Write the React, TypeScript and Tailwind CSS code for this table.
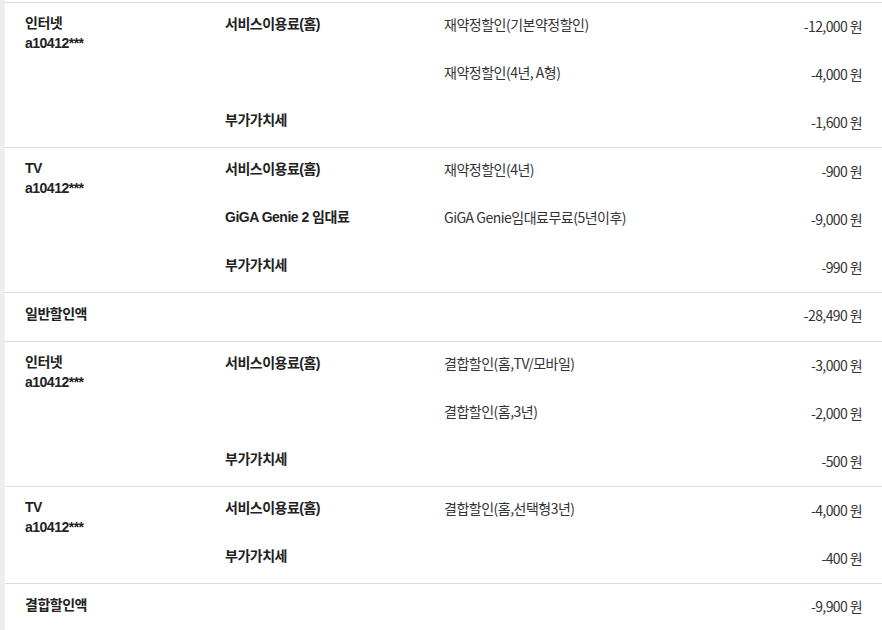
const groups: { name?: string[]; total?: { label: string; amount: string }; rows: { item?: string; desc?: string; amount: string }[] }[] = [
  {
    name: ["인터넷", "a10412***"],
    rows: [
      { item: "서비스이용료(홈)", desc: "재약정할인(기본약정할인)", amount: "-12,000" },
      { desc: "재약정할인(4년, A형)", amount: "-4,000" },
      { item: "부가가치세", amount: "-1,600" },
    ],
  },
  {
    name: ["TV", "a10412***"],
    rows: [
      { item: "서비스이용료(홈)", desc: "재약정할인(4년)", amount: "-900" },
      { item: "GiGA Genie 2 임대료", desc: "GiGA Genie임대료무료(5년이후)", amount: "-9,000" },
      { item: "부가가치세", amount: "-990" },
    ],
  },
  { total: { label: "일반할인액", amount: "-28,490" }, rows: [] },
  {
    name: ["인터넷", "a10412***"],
    rows: [
      { item: "서비스이용료(홈)", desc: "결합할인(홈,TV/모바일)", amount: "-3,000" },
      { desc: "결합할인(홈,3년)", amount: "-2,000" },
      { item: "부가가치세", amount: "-500" },
    ],
  },
  {
    name: ["TV", "a10412***"],
    rows: [
      { item: "서비스이용료(홈)", desc: "결합할인(홈,선택형3년)", amount: "-4,000" },
      { item: "부가가치세", amount: "-400" },
    ],
  },
  { total: { label: "결합할인액", amount: "-9,900" }, rows: [] },
];

const boldFont = "font-['Liberation_Sans','Noto_Sans_CJK_KR',sans-serif]";
const lightFont = "font-['Noto_Sans_CJK_KR',sans-serif]";

const Amount = ({ value }: { value: string }) => (
  <span className={`${lightFont} text-[14px] tracking-[-0.6px] text-[#333] whitespace-nowrap`}>
    {value} 원
  </span>
);

export default function App() {
  return (
    <div className="flex min-h-[630px] bg-white">
      <div className="w-[5px] shrink-0 bg-[#eeeeee]" />
      <div className="flex-1 pt-[2px]">
        <div className="border-t border-[#dcdcdc]">
          {groups.map((g, gi) => (
            <div key={gi} className="flex border-b border-[#dcdcdc] pl-[20px] pr-[20px]">
              {g.total ? (
                <div className="flex h-[48px] flex-1 items-start justify-between pt-[11px]">
                  <span className={`${boldFont} text-[14px] font-bold leading-[20px] tracking-[-0.5px] text-[#222]`}>
                    {g.total.label}
                  </span>
                  <span className="leading-[22px]">
                    <Amount value={g.total.amount} />
                  </span>
                </div>
              ) : (
                <>
                  <div className={`${boldFont} w-[200px] shrink-0 pt-[10px] text-[14px] font-bold leading-[20px] tracking-[-0.5px] text-[#222]`}>
                    {g.name?.map((n, i) => (
                      <div key={i}>{n}</div>
                    ))}
                  </div>
                  <div className="flex-1">
                    {g.rows.map((r, ri) => (
                      <div key={ri} className="flex h-[48px] items-start pt-[11px]">
                        <div className={`${boldFont} w-[219px] shrink-0 text-[14px] font-bold leading-[20px] tracking-[-0.5px] text-[#222]`}>
                          {r.item}
                        </div>
                        <div className={`${lightFont} flex-1 text-[14px] leading-[20px] tracking-[-0.5px] text-[#333]`}>
                          {r.desc}
                        </div>
                        <div className="leading-[24px]">
                          <Amount value={r.amount} />
                        </div>
                      </div>
                    ))}
                  </div>
                </>
              )}
            </div>
          ))}
        </div>
      </div>
    </div>
  );
}
